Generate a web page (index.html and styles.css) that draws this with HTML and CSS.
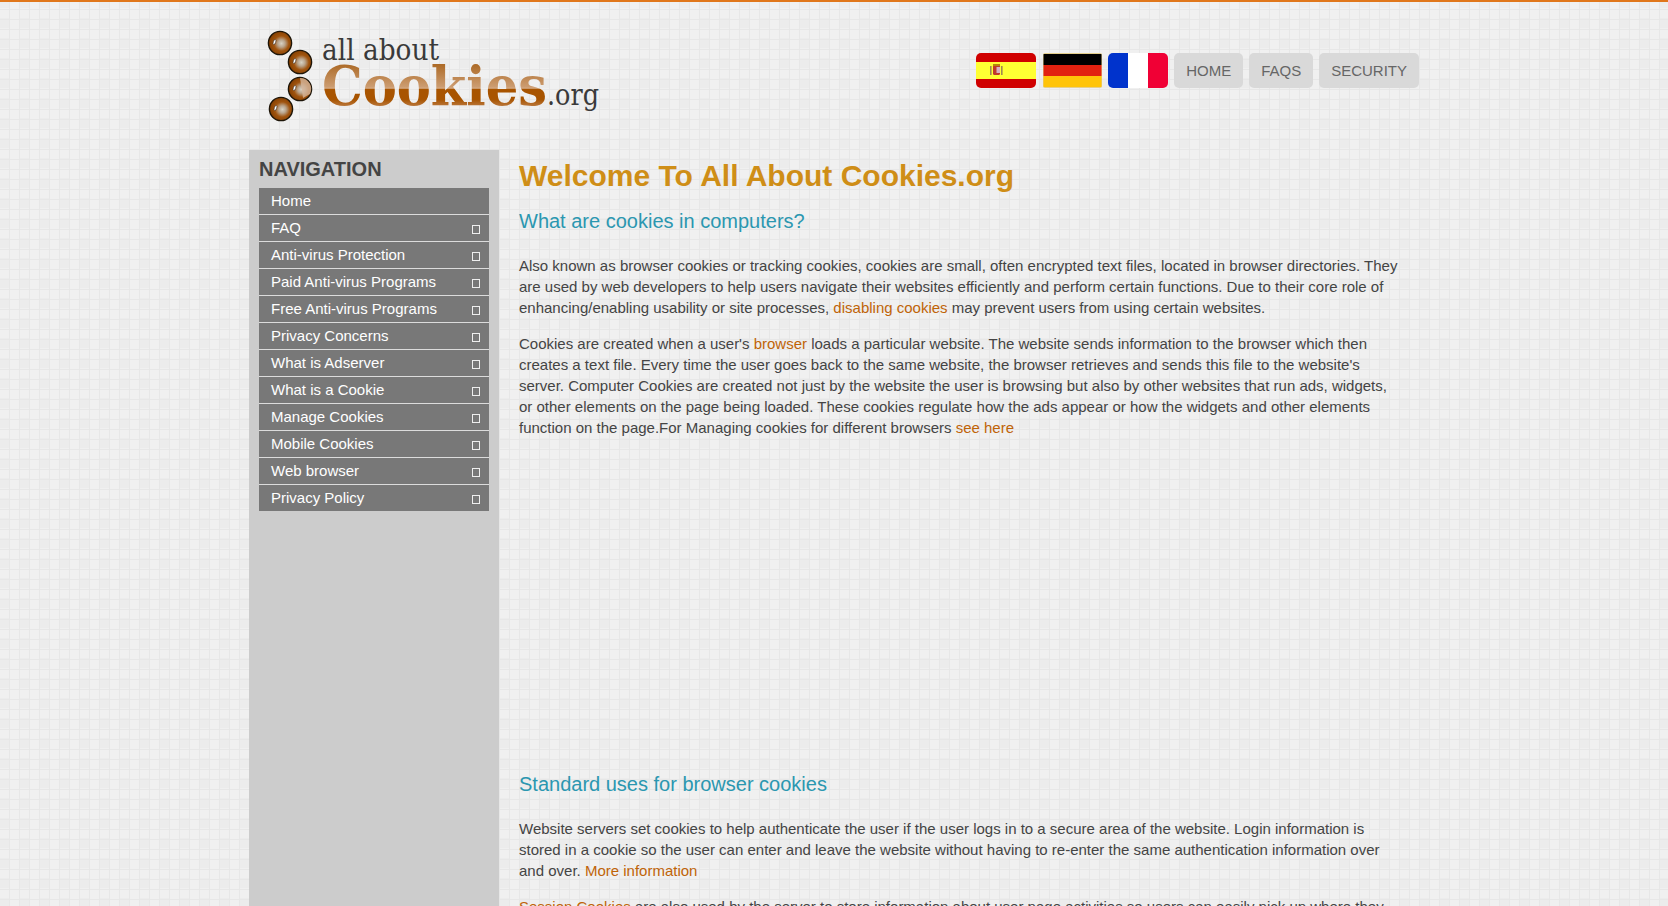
FILE: index.html
```html
<!DOCTYPE html>
<html lang="en">
<head>
<meta charset="utf-8">
<title>All About Cookies.org</title>
<link rel="stylesheet" href="styles.css">
</head>
<body>
<div class="container">
  <header class="site-header">
    <a class="logo" href="#" aria-label="All About Cookies.org">
      <svg class="logo-art" width="350" height="110" viewBox="0 0 350 110" xmlns="http://www.w3.org/2000/svg">
        <defs>
          <radialGradient id="bead" cx="0.56" cy="0.52" r="0.56">
            <stop offset="0" stop-color="#d8d2c4"/>
            <stop offset="0.28" stop-color="#b9a48c"/>
            <stop offset="0.58" stop-color="#a0540f"/>
            <stop offset="1" stop-color="#833e00"/>
          </radialGradient>
          <linearGradient id="word" gradientUnits="userSpaceOnUse" x1="0" y1="38" x2="0" y2="82">
            <stop offset="0" stop-color="#a9651f"/>
            <stop offset="0.56" stop-color="#cc9c70"/>
            <stop offset="0.6" stop-color="#d4ab86"/>
            <stop offset="0.61" stop-color="#a85400"/>
            <stop offset="0.85" stop-color="#a85400"/>
            <stop offset="1" stop-color="#b9763a"/>
          </linearGradient>
        </defs>
        <g stroke="#1c1408" stroke-width="1.4" fill="url(#bead)">
          <circle cx="20" cy="19" r="11.6"/>
          <circle cx="40" cy="38" r="11.6"/>
          <circle cx="40" cy="65" r="11.6"/>
          <circle cx="21" cy="85" r="11.6"/>
        </g>
        <path class="bead-sheen" d="M40 54 a11 11 0 0 1 10 16 l-7 4 z"/>
        <g class="bead-glint">
          <ellipse cx="14.5" cy="18" rx="1.2" ry="2.6" transform="rotate(18 14.5 18)"/>
          <ellipse cx="34.5" cy="37" rx="1.2" ry="2.6" transform="rotate(18 34.5 37)"/>
          <ellipse cx="34.5" cy="64" rx="1.2" ry="2.6" transform="rotate(18 34.5 64)"/>
          <ellipse cx="15.5" cy="84" rx="1.2" ry="2.6" transform="rotate(18 15.5 84)"/>
        </g>
        <text class="logo-small" x="62" y="36" textLength="117" lengthAdjust="spacingAndGlyphs">all about</text>
        <text class="logo-big" x="62" y="81" textLength="225" lengthAdjust="spacingAndGlyphs" fill="url(#word)">Cookies</text>
        <text class="logo-small" x="287" y="81" textLength="52" lengthAdjust="spacingAndGlyphs">.org</text>
      </svg>
    </a>
    <nav class="top-nav">
      <a class="flag" href="#" aria-label="Español">
        <svg width="60" height="35" viewBox="0 0 60 35" xmlns="http://www.w3.org/2000/svg">
          <rect width="60" height="35" fill="#d00000"/>
          <rect y="9" width="60" height="17" fill="#ffff33"/>
          <rect x="14" y="13" width="1.6" height="9" fill="#a08a50"/>
          <rect x="25" y="13" width="1.6" height="9" fill="#a08a50"/>
          <rect x="17" y="12" width="7" height="10" rx="1.5" fill="#c0392b"/>
          <rect x="20.5" y="14" width="3.5" height="6" fill="#d8b0c0"/>
          <rect x="17" y="11" width="7" height="2" fill="#b8860b"/>
        </svg>
      </a>
      <a class="flag flag-square" href="#" aria-label="Deutsch">
        <svg width="59" height="35" viewBox="0 0 59 35" xmlns="http://www.w3.org/2000/svg">
          <rect width="59" height="35" fill="#e4cf8c"/>
          <rect x="0.5" y="1" width="58" height="11" fill="#000"/>
          <rect x="0.5" y="12" width="58" height="11" fill="#e22110"/>
          <rect x="0.5" y="23" width="58" height="11" fill="#ffc408"/>
        </svg>
      </a>
      <a class="flag" href="#" aria-label="Français">
        <svg width="60" height="35" viewBox="0 0 60 35" xmlns="http://www.w3.org/2000/svg">
          <rect width="20" height="35" fill="#0033cc"/>
          <rect x="20" width="20" height="35" fill="#fff"/>
          <rect x="40" width="20" height="35" fill="#f00035"/>
        </svg>
      </a>
      <a class="btn" href="#">HOME</a>
      <a class="btn" href="#">FAQS</a>
      <a class="btn" href="#">SECURITY</a>
    </nav>
  </header>

  <div class="layout">
    <aside class="sidebar">
      <h3 class="nav-title">NAVIGATION</h3>
      <ul class="side-menu">
        <li><a href="#">Home</a></li>
        <li><a href="#">FAQ<i class="tofu"></i></a></li>
        <li><a href="#">Anti-virus Protection<i class="tofu"></i></a></li>
        <li><a href="#">Paid Anti-virus Programs<i class="tofu"></i></a></li>
        <li><a href="#">Free Anti-virus Programs<i class="tofu"></i></a></li>
        <li><a href="#">Privacy Concerns<i class="tofu"></i></a></li>
        <li><a href="#">What is Adserver<i class="tofu"></i></a></li>
        <li><a href="#">What is a Cookie<i class="tofu"></i></a></li>
        <li><a href="#">Manage Cookies<i class="tofu"></i></a></li>
        <li><a href="#">Mobile Cookies<i class="tofu"></i></a></li>
        <li><a href="#">Web browser<i class="tofu"></i></a></li>
        <li><a href="#">Privacy Policy<i class="tofu"></i></a></li>
      </ul>
    </aside>
    <main class="content">
      <h1>Welcome To All About Cookies.org</h1>
      <h2>What are cookies in computers?</h2>
      <p class="lead">Also known as browser cookies or tracking cookies, cookies are small, often encrypted text files, located in browser directories. They are used by web developers to help users navigate their websites efficiently and perform certain functions. Due to their core role of enhancing/enabling usability or site processes, <a href="#">disabling cookies</a> may prevent users from using certain websites.</p>
      <p>Cookies are created when a user's <a href="#">browser</a> loads a particular website. The website sends information to the browser which then creates a text file. Every time the user goes back to the same website, the browser retrieves and sends this file to the website's server. Computer Cookies are created not just by the website the user is browsing but also by other websites that run ads, widgets, or other elements on the page being loaded. These cookies regulate how the ads appear or how the widgets and other elements function on the page.For Managing cookies for different browsers <a href="#">see here</a></p>
      <div class="ad-slot"></div>
      <h2>Standard uses for browser cookies</h2>
      <p class="lead">Website servers set cookies to help authenticate the user if the user logs in to a secure area of the website. Login information is stored in a cookie so the user can enter and leave the website without having to re-enter the same authentication information over and over. <a href="#">More information</a></p>
      <p><a href="#">Session Cookies</a> are also used by the server to store information about user page activities so users can easily pick up where they left off.</p>
    </main>
  </div>
</div>
</body>
</html>
```

FILE: styles.css
```css
* { box-sizing: border-box; }
html, body { height: 100%; }
body {
  margin: 0;
  overflow: hidden;
  font-family: "Liberation Sans", Arial, sans-serif;
  color: #444;
  border-top: 2px solid #e0761a;
  background-color: #f0f0f0;
  background-image:
    repeating-linear-gradient(90deg, transparent 0 9px, #e7e7e7 9px 10px),
    repeating-linear-gradient(0deg, transparent 0 9px, #e7e7e7 9px 10px),
    repeating-conic-gradient(#ececec 0 25%, #f0f0f0 0 100%);
  background-size: 10px 10px, 10px 10px, 20px 20px;
  background-position: 0 0, 0 -1px, -10px -2px;
}
a { text-decoration: none; }

.container {
  width: 1170px;
  margin: 0 auto;
}

.site-header {
  height: 148px;
  display: flex;
  justify-content: space-between;
  align-items: flex-start;
}
.logo { display: block; margin: 22px 0 0 11px; }
.logo-art { display: block; }
.logo-small {
  font-family: "DejaVu Serif", serif;
  font-size: 29px;
  fill: #3a3a3a;
}
.logo-big {
  font-family: "DejaVu Serif", serif;
  font-weight: 700;
  font-size: 55px;
}
.bead-sheen { fill: #d6b79c; opacity: .8; }
.bead-glint { fill: #fff; stroke: #222; stroke-width: .5; }

.top-nav {
  display: flex;
  gap: 6px;
  margin-top: 51px;
}
.flag { display: block; height: 35px; border-radius: 5px; overflow: hidden; }
.flag svg { display: block; }
.flag-square { border-radius: 2px; margin-left: 1px; }
.btn {
  display: block;
  height: 35px;
  line-height: 35px;
  padding: 0 12px;
  font-size: 15px;
  color: #666;
  background: #d9d9d9;
  border-radius: 5px;
}

.layout { display: flex; }
.sidebar {
  flex: 0 0 250px;
  min-height: 800px;
  padding: 0 10px;
  background: #cccccc;
}
.nav-title {
  margin: 0;
  height: 38px;
  line-height: 38px;
  font-size: 20px;
  font-weight: 700;
  color: #444;
}
.side-menu { list-style: none; margin: 0; padding: 0; }
.side-menu li { border-bottom: 1px solid #dcdcdc; }
.side-menu li:last-child { border-bottom: 0; }
.side-menu a {
  display: flex;
  justify-content: space-between;
  height: 26px;
  line-height: 25px;
  padding: 0 9px 0 12px;
  font-size: 15px;
  color: #fff;
  background: #787878;
}
.tofu {
  display: block;
  width: 8px;
  height: 9px;
  margin-top: 10px;
  border: 1px solid #eee;
}

.content { flex: 1; padding: 0 20px 0 20px; }
.content h1 {
  margin: 9px 0 0;
  font-size: 30px;
  line-height: 33px;
  font-weight: 700;
  color: #cf8e17;
}
.content h2 {
  margin: 17px 0 0;
  font-size: 20px;
  line-height: 24px;
  font-weight: 400;
  color: #2b97b0;
}
.content p {
  margin: 15px 0 0;
  font-size: 15px;
  line-height: 21px;
  color: #444;
}
.content p.lead { margin-top: 22px; }
.content p a { color: #bf6408; }
.ad-slot { height: 317px; }
```
